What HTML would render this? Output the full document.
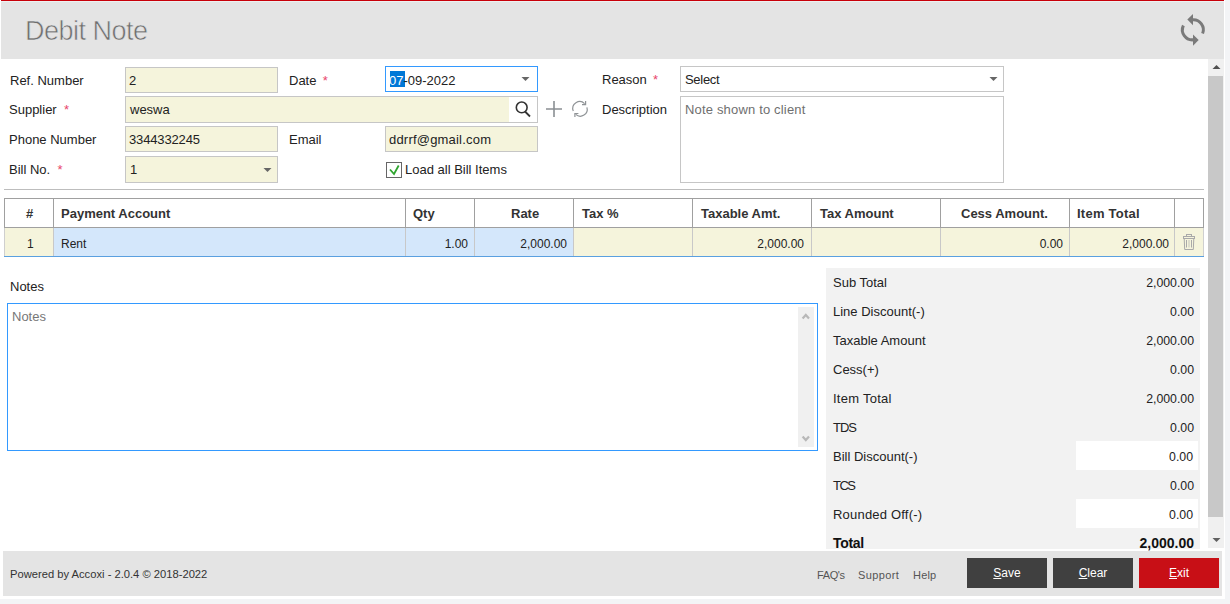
<!DOCTYPE html>
<html><head><meta charset="utf-8">
<style>
*{box-sizing:border-box;margin:0;padding:0}
html,body{width:1230px;height:604px;overflow:hidden;background:#f3f4f6;font-family:"Liberation Sans",sans-serif;color:#222}
.a{position:absolute}
.t{position:absolute;white-space:nowrap;font-size:13px;line-height:15px}
.box{position:absolute;border:1px solid #c6c6c6;background:#f5f4dc}
.req{color:#e8456b}
.hd{position:absolute;white-space:nowrap;font-size:13px;line-height:15px;font-weight:bold;color:#333}
.cell{position:absolute;white-space:nowrap;font-size:12px;line-height:14px;color:#222}
.tl{position:absolute;white-space:nowrap;font-size:13px;line-height:15px;color:#222;left:833px}
.tv{position:absolute;white-space:nowrap;font-size:12.3px;line-height:15px;color:#222;text-align:right;width:200px}
.btn{position:absolute;top:558px;width:80px;height:30px;background:#404040;color:#fff;font-size:12px;line-height:14px;padding-top:8px;text-align:center}
</style></head><body>
<!-- main white panel -->
<div class="a" style="left:0;top:0;width:1225px;height:599px;background:#fff"></div>
<!-- header -->
<div class="a" style="left:1px;top:0;width:1223px;height:1px;background:#c8000a"></div>
<div class="a" style="left:1px;top:1px;width:1223px;height:1px;background:#eef1f1"></div>
<div class="a" style="left:1px;top:2px;width:1223px;height:57px;background:#e4e4e4"></div>
<div class="t" style="left:25px;top:16px;font-size:27px;line-height:30px;color:#6e6e6e;-webkit-text-stroke:0.6px #e4e4e4;letter-spacing:-0.5px">Debit Note</div>

<!-- scrollbar -->
<div class="a" style="left:1208px;top:59px;width:16px;height:489px;background:#f0f0f0"></div>
<div class="a" style="left:1208px;top:76px;width:15px;height:441px;background:#c8c8c8"></div>

<!-- form labels -->
<div class="t" style="left:10px;top:73px">Ref. Number</div>
<div class="t" style="left:9px;top:102px">Supplier <span class="req">&nbsp;*</span></div>
<div class="t" style="left:9px;top:132px">Phone Number</div>
<div class="t" style="left:9px;top:162px">Bill No. <span class="req">&nbsp;*</span></div>
<div class="t" style="left:289px;top:73px">Date <span class="req" style="margin-left:-1px">&nbsp;*</span></div>
<div class="t" style="left:289px;top:132px">Email</div>
<div class="t" style="left:602px;top:72px">Reason <span class="req" style="margin-left:-1px">&nbsp;*</span></div>
<div class="t" style="left:602px;top:102px">Description</div>

<!-- inputs -->
<div class="box" style="left:125px;top:67px;width:153px;height:26px"></div>
<div class="t" style="left:129px;top:73px">2</div>
<div class="box" style="left:125px;top:96px;width:413px;height:27px"></div>
<div class="a" style="left:509px;top:97px;width:28px;height:25px;background:#fff"></div>
<div class="t" style="left:130px;top:102px">weswa</div>
<div class="box" style="left:125px;top:126px;width:153px;height:26px"></div>
<div class="t" style="left:129px;top:132px;letter-spacing:-0.15px">3344332245</div>
<div class="box" style="left:125px;top:156px;width:153px;height:27px"></div>
<div class="t" style="left:130px;top:162px">1</div>

<div class="box" style="left:385px;top:66px;width:153px;height:26px;border-color:#3399ff;background:#fff"></div>
<div class="a" style="left:390px;top:71px;width:15px;height:16px;background:#0078d7"></div>
<div class="t" style="left:389px;top:73px"><span style="color:#fff">07</span>-09-2022</div>
<div class="box" style="left:385px;top:126px;width:153px;height:26px"></div>
<div class="t" style="left:389px;top:132px;letter-spacing:0.2px">ddrrf@gmail.com</div>

<div class="box" style="left:680px;top:66px;width:324px;height:26px;background:#fff"></div>
<div class="t" style="left:685px;top:72px;letter-spacing:-0.3px">Select</div>
<div class="box" style="left:680px;top:96px;width:324px;height:87px;background:#fff"></div>
<div class="t" style="left:685px;top:102px;color:#6f6f6f;letter-spacing:0.17px">Note shown to client</div>

<!-- separator -->
<div class="a" style="left:4px;top:189px;width:1200px;height:1px;background:#bdbdbd"></div>


<!-- table -->
<div class="a" style="left:4px;top:198px;width:1200px;height:30px;border:1px solid #a0a0a0;border-bottom-color:#a0a0a0;background:#fff"></div>
<div class="a" style="left:5px;top:228px;width:48px;height:28px;background:#f5f4dc"></div>
<div class="a" style="left:54px;top:228px;width:519px;height:28px;background:#d4e7fb"></div>
<div class="a" style="left:574px;top:228px;width:629px;height:28px;background:#f5f4dc"></div>
<div class="a" style="left:4px;top:228px;width:1px;height:28px;background:#cfcfcf"></div>
<div class="a" style="left:1203px;top:228px;width:1px;height:28px;background:#cfcfcf"></div>
<div class="a" style="left:4px;top:256px;width:1200px;height:1px;background:#5aa0e0"></div>
<div class="a" style="left:53px;top:198px;width:1px;height:30px;background:#a0a0a0"></div>
<div class="a" style="left:53px;top:228px;width:1px;height:28px;background:#c8c8c8"></div>
<div class="a" style="left:405px;top:198px;width:1px;height:30px;background:#a0a0a0"></div>
<div class="a" style="left:405px;top:228px;width:1px;height:28px;background:#c8c8c8"></div>
<div class="a" style="left:474px;top:198px;width:1px;height:30px;background:#a0a0a0"></div>
<div class="a" style="left:474px;top:228px;width:1px;height:28px;background:#c8c8c8"></div>
<div class="a" style="left:573px;top:198px;width:1px;height:30px;background:#a0a0a0"></div>
<div class="a" style="left:573px;top:228px;width:1px;height:28px;background:#c8c8c8"></div>
<div class="a" style="left:692px;top:198px;width:1px;height:30px;background:#a0a0a0"></div>
<div class="a" style="left:692px;top:228px;width:1px;height:28px;background:#c8c8c8"></div>
<div class="a" style="left:811px;top:198px;width:1px;height:30px;background:#a0a0a0"></div>
<div class="a" style="left:811px;top:228px;width:1px;height:28px;background:#c8c8c8"></div>
<div class="a" style="left:940px;top:198px;width:1px;height:30px;background:#a0a0a0"></div>
<div class="a" style="left:940px;top:228px;width:1px;height:28px;background:#c8c8c8"></div>
<div class="a" style="left:1069px;top:198px;width:1px;height:30px;background:#a0a0a0"></div>
<div class="a" style="left:1069px;top:228px;width:1px;height:28px;background:#c8c8c8"></div>
<div class="a" style="left:1174px;top:198px;width:1px;height:30px;background:#a0a0a0"></div>
<div class="a" style="left:1174px;top:228px;width:1px;height:28px;background:#c8c8c8"></div>
<div class="hd" style="left:26px;top:206px">#</div>
<div class="hd" style="left:61px;top:206px">Payment Account</div>
<div class="hd" style="left:413px;top:206px">Qty</div>
<div class="hd" style="left:511px;top:206px">Rate</div>
<div class="hd" style="left:582px;top:206px">Tax %</div>
<div class="hd" style="left:701px;top:206px">Taxable Amt.</div>
<div class="hd" style="left:820px;top:206px">Tax Amount</div>
<div class="hd" style="left:961px;top:206px">Cess Amount.</div>
<div class="hd" style="left:1077px;top:206px;letter-spacing:0.25px">Item Total</div>
<div class="cell" style="left:27px;top:237px">1</div>
<div class="cell" style="left:61px;top:237px">Rent</div>
<div class="cell" style="left:268px;top:237px;width:200px;text-align:right">1.00</div>
<div class="cell" style="left:367px;top:237px;width:200px;text-align:right">2,000.00</div>
<div class="cell" style="left:604px;top:237px;width:200px;text-align:right">2,000.00</div>
<div class="cell" style="left:863px;top:237px;width:200px;text-align:right">0.00</div>
<div class="cell" style="left:969px;top:237px;width:200px;text-align:right">2,000.00</div>

<!-- notes -->
<div class="t" style="left:10px;top:279px">Notes</div>
<div class="a" style="left:7px;top:303px;width:811px;height:148px;border:1px solid #3399ff;background:#fff"></div>
<div class="t" style="left:12px;top:309px;color:#777">Notes</div>
<div class="a" style="left:798px;top:307px;width:16px;height:140px;background:#f0f0f0"></div>

<!-- totals -->
<div class="a" style="left:826px;top:268px;width:374px;height:281px;background:#f2f2f2"></div>
<div class="a" style="left:1076px;top:441px;width:122px;height:29px;background:#fff"></div>
<div class="a" style="left:1076px;top:499px;width:122px;height:29px;background:#fff"></div>

<div class="tl" style="top:275px">Sub Total</div>
<div class="tv" style="left:994px;top:276px">2,000.00</div>
<div class="tl" style="top:304px">Line Discount(-)</div>
<div class="tv" style="left:994px;top:305px">0.00</div>
<div class="tl" style="top:333px">Taxable Amount</div>
<div class="tv" style="left:994px;top:334px">2,000.00</div>
<div class="tl" style="top:362px">Cess(+)</div>
<div class="tv" style="left:994px;top:363px">0.00</div>
<div class="tl" style="top:391px;letter-spacing:0.25px">Item Total</div>
<div class="tv" style="left:994px;top:392px">2,000.00</div>
<div class="tl" style="top:420px;letter-spacing:-1px">TDS</div>
<div class="tv" style="left:994px;top:421px">0.00</div>
<div class="tl" style="top:449px">Bill Discount(-)</div>
<div class="tv" style="left:993px;top:450px">0.00</div>
<div class="tl" style="top:478px;letter-spacing:-1.5px">TCS</div>
<div class="tv" style="left:994px;top:479px">0.00</div>
<div class="tl" style="top:507px;letter-spacing:0.2px">Rounded Off(-)</div>
<div class="tv" style="left:993px;top:508px">0.00</div>
<div class="tl" style="top:535px;font-weight:bold;font-size:14px;line-height:16px;color:#111;letter-spacing:-0.3px">Total</div>
<div class="tv" style="left:994px;top:535px;font-weight:bold;font-size:14px;line-height:16px;color:#111">2,000.00</div>

<!-- footer -->
<div class="a" style="left:3px;top:551px;width:1219px;height:45px;background:#e4e4e4"></div>
<div class="t" style="left:10px;top:567px;font-size:11.2px;line-height:14px;color:#333">Powered by Accoxi - 2.0.4 &copy; 2018-2022</div>
<div class="t" style="left:817px;top:568px;font-size:11px;line-height:14px;color:#555;letter-spacing:-0.4px">FAQ's</div>
<div class="t" style="left:858px;top:568px;font-size:11px;line-height:14px;color:#555;letter-spacing:0.4px">Support</div>
<div class="t" style="left:913px;top:568px;font-size:11px;line-height:14px;color:#555;letter-spacing:0.2px">Help</div>
<div class="btn" style="left:967px"><u>S</u>ave</div>
<div class="btn" style="left:1053px"><u>C</u>lear</div>
<div class="btn" style="left:1139px;background:#c80f16"><u>E</u>xit</div>

<!-- icons -->
<svg class="a" style="left:0;top:0" width="1230" height="604" viewBox="0 0 1230 604">
  <!-- header refresh -->
  <g fill="none" stroke="#7a7a7a" stroke-width="3">
    <path d="M1192.5 19.8 A10 10 0 0 1 1202.6 33.5"/>
    <path d="M1183.4 25.5 A10 10 0 0 0 1193.5 39.8"/>
  </g>
  <path d="M1187.3 19.6 L1193 14 L1193 25.2 Z" fill="#7a7a7a"/>
  <path d="M1198.7 40 L1193 34.5 L1193 45.8 Z" fill="#7a7a7a"/>
  <!-- dropdown arrows -->
  <path d="M521.5 77 L529.5 77 L525.5 81 Z" fill="#666"/>
  <path d="M263.5 168 L271.5 168 L267.5 172 Z" fill="#666"/>
  <path d="M989.5 77 L997.5 77 L993.5 81 Z" fill="#666"/>
  <!-- search -->
  <circle cx="521.7" cy="107.4" r="5.4" fill="none" stroke="#333" stroke-width="1.6"/>
  <path d="M525 111.5 L530 116.5" stroke="#333" stroke-width="1.8"/>
  <!-- plus -->
  <path d="M546 109 H562 M554 101 V117" stroke="#8a8f93" stroke-width="1.6"/>
  <!-- small refresh -->
  <g fill="none" stroke="#8f9396" stroke-width="1.2">
    <path d="M573.3 111 A6.9 6.9 0 0 1 584.6 103.6"/>
    <path d="M586.9 107.3 A6.9 6.9 0 0 1 575.7 114.4"/>
    <path d="M585.6 101 V104.6 H582"/>
    <path d="M574.9 117 V113.5 H578.4"/>
  </g>
  <!-- checkbox -->
  <rect x="386.5" y="162.5" width="15" height="15" fill="#fff" stroke="#666" stroke-width="1"/>
  <path d="M390 169.5 L394 174 L398.7 165.5" fill="none" stroke="#2ea52e" stroke-width="1.8"/>
  <!-- trash -->
  <g fill="none" stroke="#a9a9a9" stroke-width="1">
    <rect x="1186.5" y="234.5" width="5" height="2"/>
    <rect x="1183.5" y="236.5" width="11" height="2"/>
    <path d="M1184.2 238.5 L1184.7 249.5 H1193.3 L1193.8 238.5"/>
    <path d="M1186.5 240 V247.5 M1191.5 240 V247.5"/>
    <path d="M1189 240 V247.5" stroke="#c4c4bc"/>
  </g>
  <!-- main scrollbar arrows -->
  <path d="M1212.5 69 L1220.5 69 L1216.5 65 Z" fill="#505050"/>
  <path d="M1212.5 538 L1220.5 538 L1216.5 542 Z" fill="#606060"/>
  <!-- notes scrollbar chevrons -->
  <path d="M802.6 318.6 L805.8 315 L809 318.6" fill="none" stroke="#b8b8b8" stroke-width="2.2"/>
  <path d="M802.6 436.4 L805.8 440 L809 436.4" fill="none" stroke="#b8b8b8" stroke-width="2.2"/>
</svg>
<div class="t" style="left:405px;top:162px">Load all Bill Items</div>
</body></html>
